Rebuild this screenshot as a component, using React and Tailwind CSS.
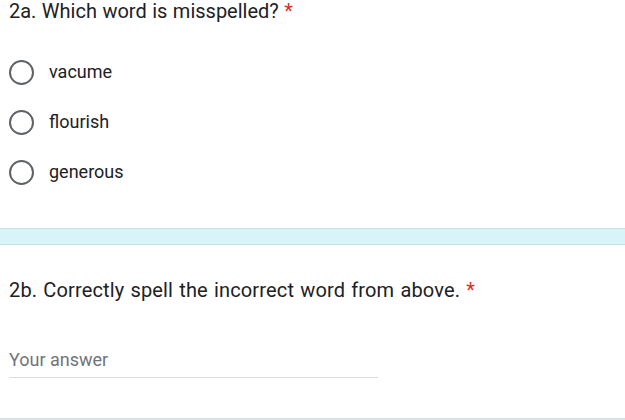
import React, { useState } from 'react';

const options = ['vacume', 'flourish', 'generous'];

const Radio = ({ checked }) => (
  <span className="flex h-[25px] w-[25px] shrink-0 items-center justify-center rounded-full border-2 border-[#5f6368]">
    {checked && <span className="h-[12px] w-[12px] rounded-full bg-[#673ab7]" />}
  </span>
);

export default function App() {
  const [picked, setPicked] = useState(null);
  const [answer, setAnswer] = useState('');

  return (
    <div className="h-[420px] w-[625px] overflow-hidden bg-white font-['Roboto',sans-serif] text-[#202124]">
      {/* Question 2a */}
      <div className="px-[9px]">
        <h2 className="pt-px text-[20px] leading-[20px] [word-spacing:0.5px]">
          2a. Which word is misspelled? <span className="text-[#d93025]">*</span>
        </h2>
        <div className="mt-[26px] flex flex-col">
          {options.map((opt) => (
            <button
              key={opt}
              onClick={() => setPicked(opt)}
              className="flex h-[50px] items-center gap-[15px] text-left"
            >
              <Radio checked={picked === opt} />
              <span className="-mt-[1px] text-[18px]">{opt}</span>
            </button>
          ))}
        </div>
      </div>

      {/* section gap */}
      <div className="mt-[31px] h-[17px] border-y border-[#c7e0e4] bg-[#d8f4f8]" />

      {/* Question 2b */}
      <div className="px-[9px]">
        <h2 className="mt-[35px] text-[20px] leading-[20px] tracking-[0.15px] [word-spacing:1px]">
          2b. Correctly spell the incorrect word from above. <span className="text-[#d93025]">*</span>
        </h2>
        <input
          value={answer}
          onChange={(e) => setAnswer(e.target.value)}
          placeholder="Your answer"
          className="mt-[50px] block w-[369px] border-b border-[#dadce0] pb-[7px] text-[18px] leading-[20px] outline-none placeholder:text-[#70757a]"
        />
      </div>
      <div className="mt-[40px] h-[2px] bg-[#d5e4e8]" />
    </div>
  );
}
